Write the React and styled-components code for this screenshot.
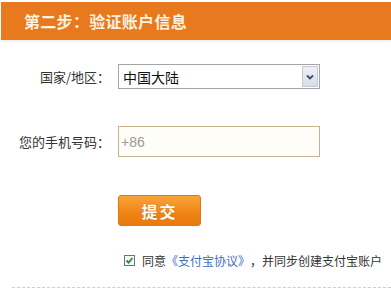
import React from "react";
import styled, { createGlobalStyle } from "styled-components";

const Global = createGlobalStyle`
  html, body { margin: 0; padding: 0; background: #fff; }
  body { font-family: "Liberation Sans", "Noto Sans CJK SC", sans-serif; width: 391px; height: 297px; overflow: hidden; }
`;

const Page = styled.div`
  width: 391px;
  height: 297px;
  padding-top: 2px;
  box-sizing: border-box;
`;

const Header = styled.div`
  margin-left: 1px;
  height: 38px;
  background: #e8791f;
  box-shadow: 0 2px 2px rgba(0, 0, 0, 0.06);
  display: flex;
  align-items: center;
  padding-left: 23px;
  color: #fdf1df;
  font-family: "Noto Sans CJK SC", sans-serif;
  font-weight: bold;
  font-size: 16px;
  letter-spacing: 0.3px;
`;

const Form = styled.div`
  display: grid;
  grid-template-columns: 110px 202px;
  column-gap: 8px;
  align-items: center;
  margin-top: 24px;
`;

const Label = styled.div`
  text-align: right;
  font-family: "Noto Sans CJK SC", sans-serif;
  font-size: 13px;
  color: #333;
  margin-top: ${(p) => p.$mt || 0}px;
`;

const SelectBox = styled.div`
  height: 25px;
  box-sizing: border-box;
  border: 1px solid #a5a5a8;
  display: flex;
  align-items: stretch;
  font-family: "Noto Sans CJK SC", sans-serif;
  font-size: 14px;
  color: #111;
`;

const SelectText = styled.div`
  flex: 1;
  display: flex;
  align-items: center;
  padding-left: 4px;
`;

const SelectArrow = styled.div`
  width: 16px;
  margin: 1px;
  box-sizing: border-box;
  border: 1px solid #c2c8d6;
  background: linear-gradient(#eef0f5, #d9dde7);
  display: flex;
  align-items: center;
  justify-content: center;
`;

const InputBox = styled.div`
  height: 31px;
  box-sizing: border-box;
  border: 1px solid #c6b38e;
  background: #fffdf7;
  display: flex;
  align-items: center;
  padding-left: 2px;
  font-family: "Liberation Sans", sans-serif;
  font-size: 14px;
  color: #999;
  margin-top: ${(p) => p.$mt || 0}px;
`;

const Submit = styled.button`
  margin-top: 38px;
  margin-left: 118px;
  width: 83px;
  height: 31px;
  border: 1px solid #e07614;
  border-radius: 3px;
  background: linear-gradient(#f9a43a, #ef8314 60%, #e97a0c);
  color: #fff;
  font-family: "Noto Sans CJK SC", sans-serif;
  font-weight: bold;
  font-size: 16px;
  letter-spacing: 2px;
  text-shadow: 0 0 1px rgba(160, 70, 0, 0.5);
  display: flex;
  align-items: center;
  justify-content: center;
  padding: 0;
  cursor: pointer;
`;

const AgreeRow = styled.div`
  margin-top: 26px;
  margin-left: 124px;
  display: flex;
  align-items: center;
  font-family: "Noto Sans CJK SC", sans-serif;
  font-size: 12px;
  color: #333;
  white-space: nowrap;
`;

const Check = styled.span`
  width: 11px;
  height: 11px;
  box-sizing: border-box;
  border: 1px solid #5a7a8c;
  background: #f4f7f4;
  display: inline-flex;
  align-items: center;
  justify-content: center;
  margin-right: 7px;
`;

const Link = styled.span`
  color: #3b6fbf;
`;

const Divider = styled.div`
  margin-top: 18px;
  margin-left: 12px;
  border-top: 1px dashed #cfcfcf;
`;

export default function App() {
  return (
    <Page>
      <Global />
      <Header>第二步：验证账户信息</Header>
      <Form>
        <Label>国家/地区：</Label>
        <SelectBox>
          <SelectText>中国大陆</SelectText>
          <SelectArrow>
            <svg width="8" height="6" viewBox="0 0 8 6">
              <path d="M1 1.5 L4 4.5 L7 1.5" fill="none" stroke="#3d4d6b" strokeWidth="1.8" />
            </svg>
          </SelectArrow>
        </SelectBox>
        <Label $mt={37}>您的手机号码：</Label>
        <InputBox $mt={37}>+86</InputBox>
      </Form>
      <Submit>提交</Submit>
      <AgreeRow>
        <Check>
          <svg width="9" height="9" viewBox="0 0 9 9">
            <path d="M1.5 4.5 L3.6 6.6 L7.5 2" fill="none" stroke="#2e8b3a" strokeWidth="1.8" />
          </svg>
        </Check>
        同意<Link>《支付宝协议》</Link>，并同步创建支付宝账户
      </AgreeRow>
      <Divider />
    </Page>
  );
}
